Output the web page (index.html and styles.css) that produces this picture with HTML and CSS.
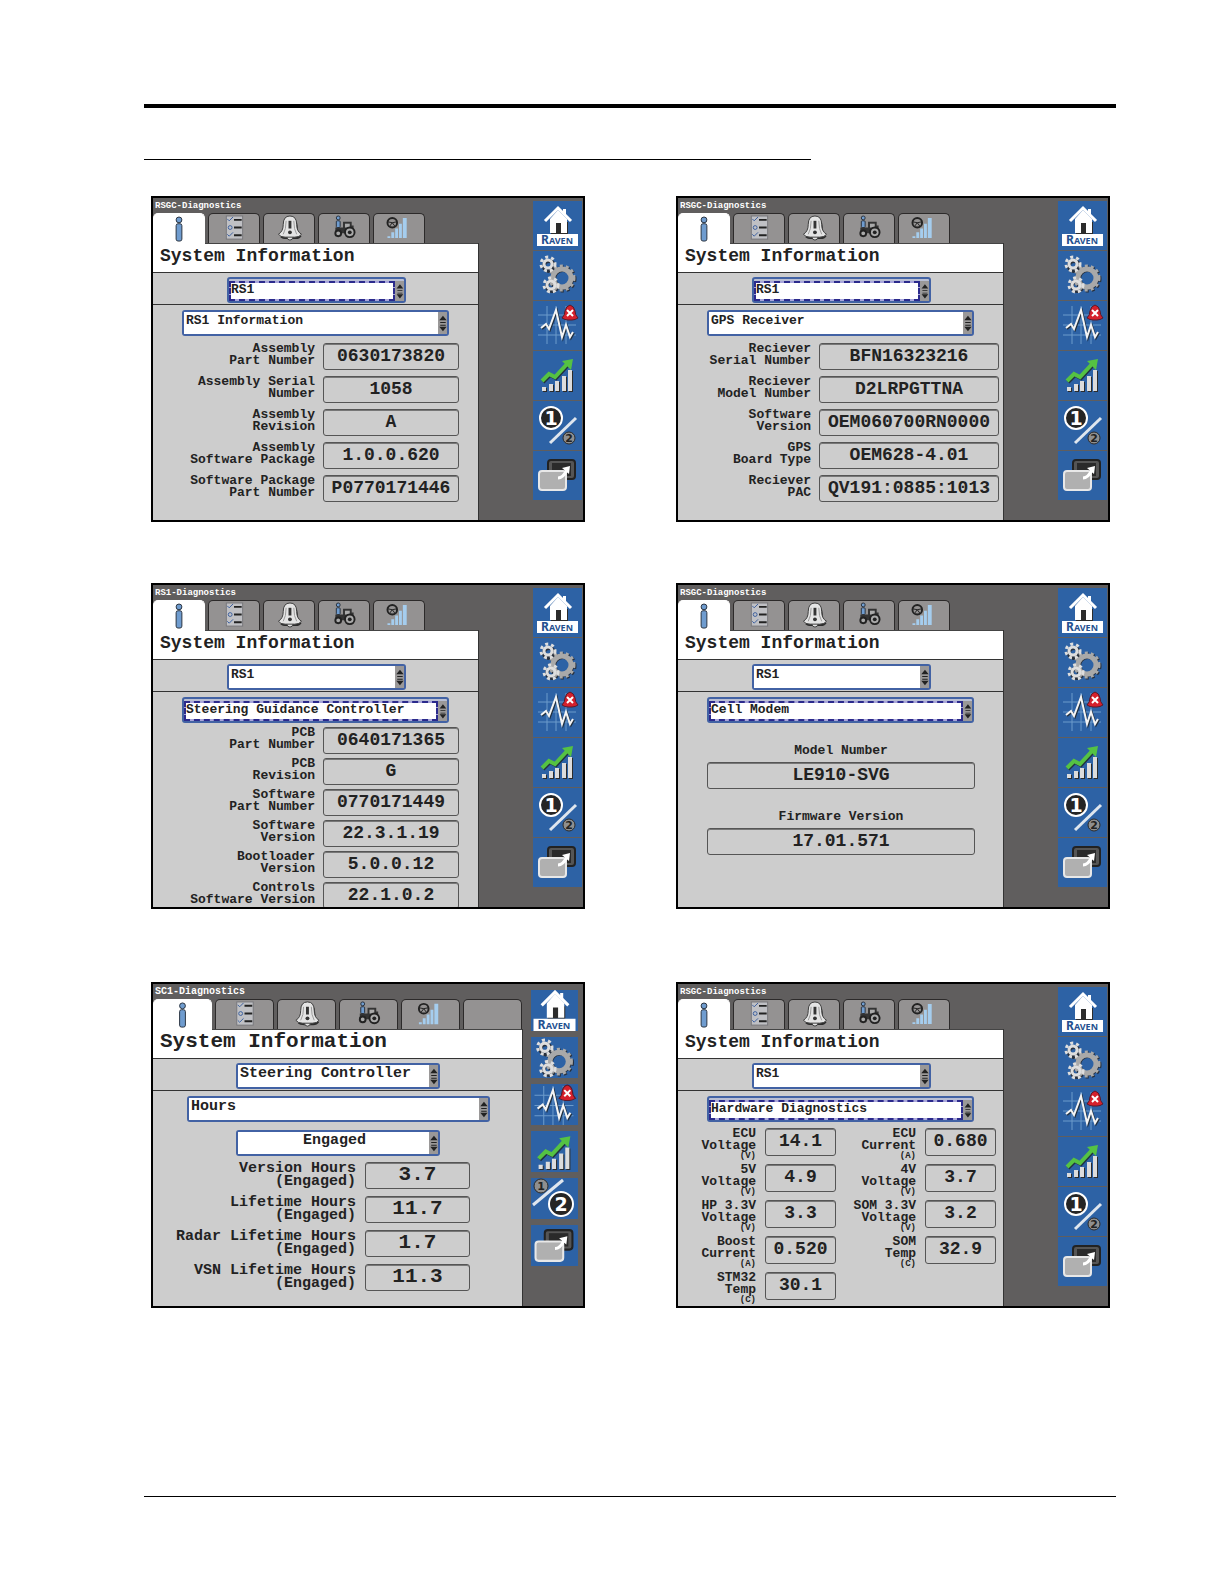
FILE: index.html
```html
<!DOCTYPE html>
<html lang="en">
<head>
<meta charset="utf-8">
<title>System Information</title>
<link rel="stylesheet" href="styles.css">
</head>
<body>
<svg class="defs" aria-hidden="true">
  <defs>
    <g id="t-info"><circle class="person" cx="26" cy="5" r="3"/><rect class="person" x="23" y="9" width="6" height="18" rx="2"/></g>
    <g id="t-list">
      <rect class="paper" x="18" y="2" width="17" height="24"/>
      <path class="ink" d="M26 6h8M26 14h8M26 22h8"/>
      <path class="tick" d="M19 5l2 2 4-4M19 21l2 2 4-4"/><circle class="tick" cx="22" cy="14" r="2"/>
    </g>
    <g id="t-bell">
      <path class="shade" d="M17 24q5-4 5-11 0-8 6-9 7 1 7 9 0 7 4 10-2 3-6 3h-9q-5 0-7-2z"/>
      <circle class="bell" cx="27" cy="24" r="3"/>
      <path class="bell" d="M15 21q5-3 5-10 0-9 7-9t7 9q0 7 5 10-2 3-7 3H22q-5 0-7-3z"/>
      <path class="mark" d="M27 7v8"/><circle class="markdot" cx="27" cy="19" r="2"/>
      <path class="crease" d="M23 7q0 9-3 14M31 7q0 9 3 14"/>
    </g>
    <g id="t-tractor">
      <circle class="person" cx="20" cy="4" r="2"/><rect class="person" x="18" y="7" width="4" height="7" rx="1"/>
      <path class="body" d="M17 14h8V8h9v4h2v8H17z"/><path class="glass" d="M27 10h5v4h-5z"/>
      <circle class="wheel" cx="20" cy="20" r="3"/><circle class="wheel" cx="32" cy="19" r="5"/><circle class="hub" cx="32" cy="19" r="2"/>
    </g>
    <g id="t-signal">
      <path class="bars" d="M14 23h3v2h-3zM18 19h3v6h-3zM22 15h3v10h-3zM26 10h3v15h-3zM30 4h4v21h-4z"/>
      <circle class="steer" cx="19" cy="9" r="5"/><path class="steer thin" d="M14 8l5 1 5-1M19 9l-3 4M19 9l3 4"/>
    </g>
    <g id="s-home">
      <path class="shade" d="M18 21h17v12H18z"/>
      <path class="white" d="M30 8h3v6h-3zM25 9l9 9v14h-6V22h-5v10h-6V18z"/>
      <path class="roof" d="M12 20L25 7l13 13"/>
      <path class="white" d="M4 33h41v12H4z"/>
      <text class="raven" x="24" y="43" text-anchor="middle">R<tspan class="aven">AVEN</tspan></text>
    </g>
    <g id="s-gears">
      <g class="gear shadow"><circle cx="30" cy="28" r="9"/><circle class="teeth" cx="30" cy="28" r="12"/><circle cx="16" cy="15" r="5"/><circle cx="19" cy="35" r="5"/></g>
      <g class="gear big"><circle cx="29" cy="27" r="9"/><circle class="teeth" cx="29" cy="27" r="12"/></g>
      <g class="gear small"><circle cx="15" cy="13" r="4"/><circle class="teeth" cx="15" cy="13" r="7"/></g>
      <g class="gear small"><circle cx="18" cy="34" r="4"/><circle class="teeth" cx="18" cy="34" r="7"/></g>
    </g>
    <g id="s-pulse">
      <path class="grid" d="M14 5v38M23 5v38M33 5v38M5 14h38M5 24h38M5 34h38"/>
      <path class="wave dark" d="M9 28l5-4 3 5 7-19 6 27 4-12 4 12 3-5"/>
      <path class="wave" d="M8 27l5-4 3 5 7-19 6 27 4-12 4 12 3-5"/>
      <path class="alarm" d="M29 17q3-3 3-7 1-5 5-6 4 1 5 6 0 4 3 7-3 2-6 2h-4q-3 0-6-2z"/><path class="cross" d="M34 9l6 6M40 9l-6 6"/>
    </g>
    <g id="s-chart">
      <path class="shade" d="M10 37h4v4h-4zM17 34h4v7h-4zM23 31h4v10h-4zM30 26h4v15h-4zM36 20h4v21h-4z"/>
      <path class="pale" d="M9 36h4v4H9zM16 33h4v7h-4zM22 30h4v10h-4zM29 25h4v15h-4zM35 19h4v21h-4z"/>
      <path class="trend dark" d="M10 31l7-7 6 3 13-14"/><path class="trend" d="M9 30l7-7 6 3 13-14"/><path class="tip" d="M29 10l11-2-2 11z"/>
    </g>
    <g id="s-page">
      <path class="slash" d="M17 42L43 17"/>
      <circle class="on" cx="18" cy="17" r="11"/><text class="digit" x="18" y="24" text-anchor="middle">1</text>
      <circle class="off" cx="36" cy="37" r="6"/><text class="mini" x="36" y="41" text-anchor="middle">2</text>
    </g>
    <g id="s-page2">
      <path class="slash" d="M2 27L32 2"/>
      <circle class="off" cx="10" cy="8" r="7"/><text class="mini" x="10" y="12" text-anchor="middle">1</text>
      <circle class="on" cx="30" cy="26" r="12"/><text class="digit" x="30" y="33" text-anchor="middle">2</text>
    </g>
    <g id="s-swap">
      <rect class="back" x="15" y="9" width="27" height="19" rx="3"/><rect class="backin" x="19" y="12" width="19" height="13"/>
      <rect class="front" x="6" y="20" width="27" height="19" rx="3"/>
      <path class="arrow" d="M25 27q5 0 9-8"/><path class="white" d="M29 17l8-2-1 8z"/>
    </g>
    <g id="arrows"><path d="M1 9l4-5 4 5zM2 11h6v1H2zM2 14h6v1H2zM1 16h8l-4 5z"/></g>
  </defs>
</svg>

<div class="page">
  <hr class="rule thick">
  <hr class="rule heading-rule">

  <main class="screens">
    <section class="screen">
      <div class="display">
        <p class="title">RSGC-Diagnostics</p>
        <div class="tabs">
          <button class="tab active" aria-label="Information"><svg viewBox="0 0 52 30"><use href="#t-info"/></svg></button>
          <button class="tab" aria-label="Checklist"><svg viewBox="0 0 52 30"><use href="#t-list"/></svg></button>
          <button class="tab" aria-label="Alarms"><svg viewBox="0 0 52 30"><use href="#t-bell"/></svg></button>
          <button class="tab" aria-label="Machine"><svg viewBox="0 0 52 30"><use href="#t-tractor"/></svg></button>
          <button class="tab" aria-label="Signal"><svg viewBox="0 0 52 30"><use href="#t-signal"/></svg></button>
        </div>
        <div class="work">
          <h2>System Information</h2>
          <div class="device"><span class="pick narrow focus"><select aria-label="Device"><option>RS1</option></select><svg class="spin" viewBox="0 0 9 24"><use href="#arrows"/></svg></span></div>
          <div class="pick wide"><select aria-label="Page"><option>RS1 Information</option></select><svg class="spin" viewBox="0 0 9 24"><use href="#arrows"/></svg></div>
          <form class="fields five">
            <label for="a1">Assembly<br>Part Number</label><input id="a1" readonly value="0630173820">
            <label for="a2">Assembly Serial<br>Number</label><input id="a2" readonly value="1058">
            <label for="a3">Assembly<br>Revision</label><input id="a3" readonly value="A">
            <label for="a4">Assembly<br>Software Package</label><input id="a4" readonly value="1.0.0.620">
            <label for="a5">Software Package<br>Part Number</label><input id="a5" readonly value="P0770171446">
          </form>
        </div>
      </div>
      <nav class="side">
        <button aria-label="Home"><svg viewBox="0 0 49 49"><use href="#s-home"/></svg></button>
        <button aria-label="Settings"><svg viewBox="0 0 49 49"><use href="#s-gears"/></svg></button>
        <button aria-label="Diagnostics"><svg viewBox="0 0 49 49"><use href="#s-pulse"/></svg></button>
        <button aria-label="Performance"><svg viewBox="0 0 49 49"><use href="#s-chart"/></svg></button>
        <button aria-label="Page 1 of 2"><svg viewBox="0 0 49 49"><use href="#s-page"/></svg></button>
        <button aria-label="Switch window"><svg viewBox="0 0 49 49"><use href="#s-swap"/></svg></button>
      </nav>
    </section>

    <section class="screen">
      <div class="display">
        <p class="title">RSGC-Diagnostics</p>
        <div class="tabs">
          <button class="tab active" aria-label="Information"><svg viewBox="0 0 52 30"><use href="#t-info"/></svg></button>
          <button class="tab" aria-label="Checklist"><svg viewBox="0 0 52 30"><use href="#t-list"/></svg></button>
          <button class="tab" aria-label="Alarms"><svg viewBox="0 0 52 30"><use href="#t-bell"/></svg></button>
          <button class="tab" aria-label="Machine"><svg viewBox="0 0 52 30"><use href="#t-tractor"/></svg></button>
          <button class="tab" aria-label="Signal"><svg viewBox="0 0 52 30"><use href="#t-signal"/></svg></button>
        </div>
        <div class="work">
          <h2>System Information</h2>
          <div class="device"><span class="pick narrow focus"><select aria-label="Device"><option>RS1</option></select><svg class="spin" viewBox="0 0 9 24"><use href="#arrows"/></svg></span></div>
          <div class="pick wide"><select aria-label="Page"><option>GPS Receiver</option></select><svg class="spin" viewBox="0 0 9 24"><use href="#arrows"/></svg></div>
          <form class="fields five gps">
            <label for="b1">Reciever<br>Serial Number</label><input id="b1" readonly value="BFN16323216">
            <label for="b2">Reciever<br>Model Number</label><input id="b2" readonly value="D2LRPGTTNA">
            <label for="b3">Software<br>Version</label><input id="b3" readonly value="OEM060700RN0000">
            <label for="b4">GPS<br>Board Type</label><input id="b4" readonly value="OEM628-4.01">
            <label for="b5">Reciever<br>PAC</label><input id="b5" readonly value="QV191:0885:1013">
          </form>
        </div>
      </div>
      <nav class="side">
        <button aria-label="Home"><svg viewBox="0 0 49 49"><use href="#s-home"/></svg></button>
        <button aria-label="Settings"><svg viewBox="0 0 49 49"><use href="#s-gears"/></svg></button>
        <button aria-label="Diagnostics"><svg viewBox="0 0 49 49"><use href="#s-pulse"/></svg></button>
        <button aria-label="Performance"><svg viewBox="0 0 49 49"><use href="#s-chart"/></svg></button>
        <button aria-label="Page 1 of 2"><svg viewBox="0 0 49 49"><use href="#s-page"/></svg></button>
        <button aria-label="Switch window"><svg viewBox="0 0 49 49"><use href="#s-swap"/></svg></button>
      </nav>
    </section>

    <section class="screen">
      <div class="display">
        <p class="title">RS1-Diagnostics</p>
        <div class="tabs">
          <button class="tab active" aria-label="Information"><svg viewBox="0 0 52 30"><use href="#t-info"/></svg></button>
          <button class="tab" aria-label="Checklist"><svg viewBox="0 0 52 30"><use href="#t-list"/></svg></button>
          <button class="tab" aria-label="Alarms"><svg viewBox="0 0 52 30"><use href="#t-bell"/></svg></button>
          <button class="tab" aria-label="Machine"><svg viewBox="0 0 52 30"><use href="#t-tractor"/></svg></button>
          <button class="tab" aria-label="Signal"><svg viewBox="0 0 52 30"><use href="#t-signal"/></svg></button>
        </div>
        <div class="work">
          <h2>System Information</h2>
          <div class="device"><span class="pick narrow"><select aria-label="Device"><option>RS1</option></select><svg class="spin" viewBox="0 0 9 24"><use href="#arrows"/></svg></span></div>
          <div class="pick wide focus"><select aria-label="Page"><option>Steering Guidance Controller</option></select><svg class="spin" viewBox="0 0 9 24"><use href="#arrows"/></svg></div>
          <form class="fields six">
            <label for="c1">PCB<br>Part Number</label><input id="c1" readonly value="0640171365">
            <label for="c2">PCB<br>Revision</label><input id="c2" readonly value="G">
            <label for="c3">Software<br>Part Number</label><input id="c3" readonly value="0770171449">
            <label for="c4">Software<br>Version</label><input id="c4" readonly value="22.3.1.19">
            <label for="c5">Bootloader<br>Version</label><input id="c5" readonly value="5.0.0.12">
            <label for="c6">Controls<br>Software Version</label><input id="c6" readonly value="22.1.0.2">
          </form>
        </div>
      </div>
      <nav class="side">
        <button aria-label="Home"><svg viewBox="0 0 49 49"><use href="#s-home"/></svg></button>
        <button aria-label="Settings"><svg viewBox="0 0 49 49"><use href="#s-gears"/></svg></button>
        <button aria-label="Diagnostics"><svg viewBox="0 0 49 49"><use href="#s-pulse"/></svg></button>
        <button aria-label="Performance"><svg viewBox="0 0 49 49"><use href="#s-chart"/></svg></button>
        <button aria-label="Page 1 of 2"><svg viewBox="0 0 49 49"><use href="#s-page"/></svg></button>
        <button aria-label="Switch window"><svg viewBox="0 0 49 49"><use href="#s-swap"/></svg></button>
      </nav>
    </section>

    <section class="screen">
      <div class="display">
        <p class="title">RSGC-Diagnostics</p>
        <div class="tabs">
          <button class="tab active" aria-label="Information"><svg viewBox="0 0 52 30"><use href="#t-info"/></svg></button>
          <button class="tab" aria-label="Checklist"><svg viewBox="0 0 52 30"><use href="#t-list"/></svg></button>
          <button class="tab" aria-label="Alarms"><svg viewBox="0 0 52 30"><use href="#t-bell"/></svg></button>
          <button class="tab" aria-label="Machine"><svg viewBox="0 0 52 30"><use href="#t-tractor"/></svg></button>
          <button class="tab" aria-label="Signal"><svg viewBox="0 0 52 30"><use href="#t-signal"/></svg></button>
        </div>
        <div class="work">
          <h2>System Information</h2>
          <div class="device"><span class="pick narrow"><select aria-label="Device"><option>RS1</option></select><svg class="spin" viewBox="0 0 9 24"><use href="#arrows"/></svg></span></div>
          <div class="pick wide focus"><select aria-label="Page"><option>Cell Modem</option></select><svg class="spin" viewBox="0 0 9 24"><use href="#arrows"/></svg></div>
          <form class="stack">
            <label for="d1">Model Number</label><input id="d1" readonly value="LE910-SVG">
            <label for="d2">Firmware Version</label><input id="d2" readonly value="17.01.571">
          </form>
        </div>
      </div>
      <nav class="side">
        <button aria-label="Home"><svg viewBox="0 0 49 49"><use href="#s-home"/></svg></button>
        <button aria-label="Settings"><svg viewBox="0 0 49 49"><use href="#s-gears"/></svg></button>
        <button aria-label="Diagnostics"><svg viewBox="0 0 49 49"><use href="#s-pulse"/></svg></button>
        <button aria-label="Performance"><svg viewBox="0 0 49 49"><use href="#s-chart"/></svg></button>
        <button aria-label="Page 1 of 2"><svg viewBox="0 0 49 49"><use href="#s-page"/></svg></button>
        <button aria-label="Switch window"><svg viewBox="0 0 49 49"><use href="#s-swap"/></svg></button>
      </nav>
    </section>

    <section class="screen sc1">
      <div class="display">
        <p class="title">SC1-Diagnostics</p>
        <div class="tabs">
          <button class="tab active" aria-label="Information"><svg viewBox="0 0 52 30"><use href="#t-info"/></svg></button>
          <button class="tab" aria-label="Checklist"><svg viewBox="0 0 52 30"><use href="#t-list"/></svg></button>
          <button class="tab" aria-label="Alarms"><svg viewBox="0 0 52 30"><use href="#t-bell"/></svg></button>
          <button class="tab" aria-label="Machine"><svg viewBox="0 0 52 30"><use href="#t-tractor"/></svg></button>
          <button class="tab" aria-label="Signal"><svg viewBox="0 0 52 30"><use href="#t-signal"/></svg></button>
          <button class="tab" aria-label="Empty"></button>
        </div>
        <div class="work">
          <h2>System Information</h2>
          <div class="device"><span class="pick narrow"><select aria-label="Device"><option>Steering Controller</option></select><svg class="spin" viewBox="0 0 9 24"><use href="#arrows"/></svg></span></div>
          <div class="pick wide"><select aria-label="Page"><option>Hours</option></select><svg class="spin" viewBox="0 0 9 24"><use href="#arrows"/></svg></div>
          <div class="pick narrow state"><select aria-label="State"><option>Engaged</option></select><svg class="spin" viewBox="0 0 9 24"><use href="#arrows"/></svg></div>
          <form class="fields hours">
            <label for="e1">Version Hours<br>(Engaged)</label><input id="e1" readonly value="3.7">
            <label for="e2">Lifetime Hours<br>(Engaged)</label><input id="e2" readonly value="11.7">
            <label for="e3">Radar Lifetime Hours<br>(Engaged)</label><input id="e3" readonly value="1.7">
            <label for="e4">VSN Lifetime Hours<br>(Engaged)</label><input id="e4" readonly value="11.3">
          </form>
        </div>
      </div>
      <nav class="side">
        <button aria-label="Home"><svg viewBox="2 5 45 40"><use href="#s-home"/></svg></button>
        <button aria-label="Settings"><svg viewBox="2 3 45 40"><use href="#s-gears"/></svg></button>
        <button aria-label="Diagnostics"><svg viewBox="2 3 45 40"><use href="#s-pulse"/></svg></button>
        <button aria-label="Performance"><svg viewBox="2 3 45 40"><use href="#s-chart"/></svg></button>
        <button aria-label="Page 2 of 2"><svg viewBox="0 0 47 41"><use href="#s-page2"/></svg></button>
        <button aria-label="Switch window"><svg viewBox="2 4 45 40"><use href="#s-swap"/></svg></button>
      </nav>
    </section>

    <section class="screen">
      <div class="display">
        <p class="title">RSGC-Diagnostics</p>
        <div class="tabs">
          <button class="tab active" aria-label="Information"><svg viewBox="0 0 52 30"><use href="#t-info"/></svg></button>
          <button class="tab" aria-label="Checklist"><svg viewBox="0 0 52 30"><use href="#t-list"/></svg></button>
          <button class="tab" aria-label="Alarms"><svg viewBox="0 0 52 30"><use href="#t-bell"/></svg></button>
          <button class="tab" aria-label="Machine"><svg viewBox="0 0 52 30"><use href="#t-tractor"/></svg></button>
          <button class="tab" aria-label="Signal"><svg viewBox="0 0 52 30"><use href="#t-signal"/></svg></button>
        </div>
        <div class="work">
          <h2>System Information</h2>
          <div class="device"><span class="pick narrow"><select aria-label="Device"><option>RS1</option></select><svg class="spin" viewBox="0 0 9 24"><use href="#arrows"/></svg></span></div>
          <div class="pick wide focus"><select aria-label="Page"><option>Hardware Diagnostics</option></select><svg class="spin" viewBox="0 0 9 24"><use href="#arrows"/></svg></div>
          <form class="fields hardware">
            <label for="f1">ECU<br>Voltage<small>(V)</small></label><input id="f1" readonly value="14.1">
            <label for="f2">ECU<br>Current<small>(A)</small></label><input id="f2" readonly value="0.680">
            <label for="f3">5V<br>Voltage<small>(V)</small></label><input id="f3" readonly value="4.9">
            <label for="f4">4V<br>Voltage<small>(V)</small></label><input id="f4" readonly value="3.7">
            <label for="f5">HP 3.3V<br>Voltage<small>(V)</small></label><input id="f5" readonly value="3.3">
            <label for="f6">SOM 3.3V<br>Voltage<small>(V)</small></label><input id="f6" readonly value="3.2">
            <label for="f7">Boost<br>Current<small>(A)</small></label><input id="f7" readonly value="0.520">
            <label for="f8">SOM<br>Temp<small>(C)</small></label><input id="f8" readonly value="32.9">
            <label for="f9">STM32<br>Temp<small>(C)</small></label><input id="f9" readonly value="30.1">
          </form>
        </div>
      </div>
      <nav class="side">
        <button aria-label="Home"><svg viewBox="0 0 49 49"><use href="#s-home"/></svg></button>
        <button aria-label="Settings"><svg viewBox="0 0 49 49"><use href="#s-gears"/></svg></button>
        <button aria-label="Diagnostics"><svg viewBox="0 0 49 49"><use href="#s-pulse"/></svg></button>
        <button aria-label="Performance"><svg viewBox="0 0 49 49"><use href="#s-chart"/></svg></button>
        <button aria-label="Page 1 of 2"><svg viewBox="0 0 49 49"><use href="#s-page"/></svg></button>
        <button aria-label="Switch window"><svg viewBox="0 0 49 49"><use href="#s-swap"/></svg></button>
      </nav>
    </section>
  </main>

  <hr class="rule foot">
</div>
</body>
</html>
```
FILE: styles.css
```css
* { box-sizing: border-box; }

body {
  margin: 0;
  background: #fff;
  color: #222;
  font-family: "Liberation Mono", monospace;
  font-weight: bold;
}

.defs { display: block; width: 0; height: 0; }

.page {
  display: flex;
  flex-direction: column;
  min-height: 100vh;
  padding: 104px 108px 87px 144px;
}

.rule { width: 100%; height: 1px; margin: 0; border: 0; background: #000; flex: none; }
.thick { height: 4px; }
.heading-rule { width: 68.6%; margin: 51px 0 36px; }
.foot { margin-top: auto; }

.screens {
  display: grid;
  grid-template-columns: 1fr 1fr;
  column-gap: 91px;
  padding: 0 6px 0 7px;
}

/* one terminal display */
.screen {
  display: grid;
  grid-template-columns: minmax(0, 1fr) 104px;
  aspect-ratio: 217 / 163;
  min-height: 0;
  margin-bottom: 61px;
  overflow: hidden;
  border: 2px solid #000;
  background: #605e5e;
}
.screen:nth-child(3), .screen:nth-child(4) { margin-bottom: 73px; }

.display { display: flex; flex-direction: column; min-width: 0; min-height: 0; }

.title { margin: 0; padding: 2px 0 0 2px; height: 15px; color: #fff; font-size: 9px; line-height: 12px; }

.tabs { display: flex; gap: 3px; height: 30px; }
.tab {
  width: 52px;
  padding: 0;
  border: 1px solid #2c2a2a;
  border-bottom: 0;
  border-radius: 5px 5px 0 0;
  background: #949292;
}
.tab.active { margin-bottom: -1px; z-index: 1; border-color: #fff; background: #fff; }
.tab svg { display: block; width: 100%; height: 29px; }

.work { flex: 1; min-height: 0; border-right: 1px solid #333; background: #cdcdcd; }
h2 {
  height: 30px;
  margin: 0;
  padding-left: 7px;
  border-top: 1px solid #444;
  border-bottom: 1px solid #333;
  background: #fff;
  font-size: 18px;
  line-height: 24px;
  white-space: nowrap;
}

.device { height: 32px; padding-top: 4px; border-bottom: 1px solid #333; }

/* selection boxes */
.pick {
  display: flex;
  height: 26px;
  border: 2px solid #4262a4;
  border-radius: 3px;
  background: #fff;
}
.narrow { width: 179px; margin-left: 74px; }
.wide { width: 267px; margin: 5px 0 0 29px; }
.pick select {
  flex: 1;
  min-width: 0;
  height: 22px;
  padding: 0 0 5px 2px;
  border: 0;
  appearance: none;
  background: #fff;
  color: #222;
  font: inherit;
  font-size: 13px;
  line-height: 15px;
}
.pick.focus { padding-top: 2px; background: #b9bfd4; }
.pick.focus select {
  height: 20px;
  padding: 0 0 3px 0;
  border: 2px dashed #2b2a8c;
  background: linear-gradient(#fff, #fff) padding-box, linear-gradient(#a8a5da, #a8a5da) border-box;
  line-height: 13px;
}
.spin { flex: none; width: 9px; height: 22px; background: #9a9898; fill: #222; }
.focus .spin { height: 20px; }

/* readings */
.fields { display: grid; margin: 0; }
.fields label { font-size: 13px; line-height: 12px; text-align: right; white-space: nowrap; }
input {
  width: 100%;
  height: 27px;
  min-width: 0;
  padding: 0 0 2px;
  border: 1px solid #555;
  border-radius: 3px;
  background: #cdcdcd;
  box-shadow: inset 0 1px 0 #777;
  color: #222;
  font: inherit;
  font-size: 18px;
  text-align: center;
}
.five { grid-template-columns: 162px 136px; gap: 6px 8px; padding-top: 7px; }
.five.gps { grid-template-columns: 133px 180px; }
.six { grid-template-columns: 162px 136px; gap: 4px 8px; padding-top: 4px; }
.hardware { grid-template-columns: 78px 71px 71px 71px; gap: 3px 9px; padding-top: 6px; }
.hardware label { height: 33px; }
.hardware input { height: 28px; }
small { display: block; font-size: 9px; line-height: 9px; }

.stack { margin: 0; padding: 22px 28px 0 29px; text-align: center; }
.stack label { display: block; height: 17px; font-size: 13px; line-height: 12px; }
.stack input { display: block; margin-bottom: 22px; }

/* side keys */
.side { display: flex; flex-direction: column; align-items: flex-end; gap: 1px; padding: 3px 1px 0 0; }
.side button { width: 49px; height: 49px; padding: 0; border: 0; background: #2d62a5; }
.side svg { display: block; width: 100%; height: 100%; }

.sc1 { grid-template-columns: minmax(0, 1fr) 60px; }
.sc1 .title { font-size: 10px; }
.sc1 .tab { width: 59px; }
.sc1 h2 { font-size: 21px; }
.sc1 .narrow { width: 204px; margin-left: 83px; }
.sc1 .wide { width: 303px; margin-left: 34px; }
.sc1 .state { margin-top: 8px; }
.sc1 select { font-size: 15px; }
.sc1 .state select { text-align: center; text-align-last: center; }
.hours { grid-template-columns: 203px 105px; gap: 7px 9px; padding-top: 6px; }
.hours label { font-size: 15px; line-height: 13px; }
.hours input { font-size: 21px; }
.sc1 .side { gap: 6px; padding: 6px 5px 0 0; }
.sc1 .side button { width: 47px; height: 41px; }

/* icon paint */
.person { fill: #6f9ccf; stroke: #26303c; stroke-width: 1; }
.paper { fill: #bfc0c4; stroke: #77777b; }
.ink { stroke: #222; stroke-width: 2; }
.tick { fill: none; stroke: #3a5f9f; stroke-width: 1; }
.shade { fill: #2c2c2c; }
.bell { fill: #e4e4e4; stroke: #3a3a3a; stroke-width: 1; }
.mark { stroke: #333; stroke-width: 3; }
.markdot { fill: #333; }
.crease { fill: none; stroke: #999; }
.body { fill: #333; }
.glass { fill: #aaa; }
.wheel { fill: #aaa; stroke: #222; stroke-width: 2; }
.hub { fill: #222; }
.bars { fill: #a5cdee; }
.steer { fill: none; stroke: #222; stroke-width: 2; }
.steer.thin { stroke-width: 1; }
.white { fill: #fff; }
.roof { fill: none; stroke: #fff; stroke-width: 3; }
.raven { fill: #24508f; font: bold 12px "Noto Sans", sans-serif; }
.aven { font-size: 9px; }
.gear circle { fill: none; stroke-width: 4; }
.gear .teeth { stroke-width: 3; stroke-dasharray: 3 3; }
.shadow { stroke: #28303c; }
.big { stroke: #a9a9a9; }
.small { stroke: #dedede; }
.gear.small circle { stroke-width: 3; }
.gear.big circle:first-child { stroke-width: 5; }
.grid { stroke: #6c9bcb; stroke-width: 1; }
.wave { fill: none; stroke: #f4f4f4; stroke-width: 2; }
.wave.dark, .trend.dark { stroke: #22303f; }
.alarm { fill: #d5202c; stroke: #5a1a2a; stroke-width: 1; }
.cross { stroke: #fff; stroke-width: 2; }
.pale { fill: #dcdcdc; }
.trend { fill: none; stroke: #55c243; stroke-width: 4; }
.tip { fill: #55c243; }
.slash { stroke: #dfe6ee; stroke-width: 3; }
.on { fill: #252525; stroke: #fff; stroke-width: 2; }
.digit { fill: #fff; font: bold 19px "DejaVu Sans", sans-serif; }
.off { fill: #8f8f8f; stroke: #2b2b2b; stroke-width: 1; }
.mini { fill: #222; font: bold 11px "DejaVu Sans", sans-serif; }
.back { fill: #555; stroke: #222; stroke-width: 2; }
.backin { fill: #2a2a2a; }
.front { fill: #b0b0b0; stroke: #e8e8e8; stroke-width: 2; }
.arrow { fill: none; stroke: #fff; stroke-width: 3; }
```
